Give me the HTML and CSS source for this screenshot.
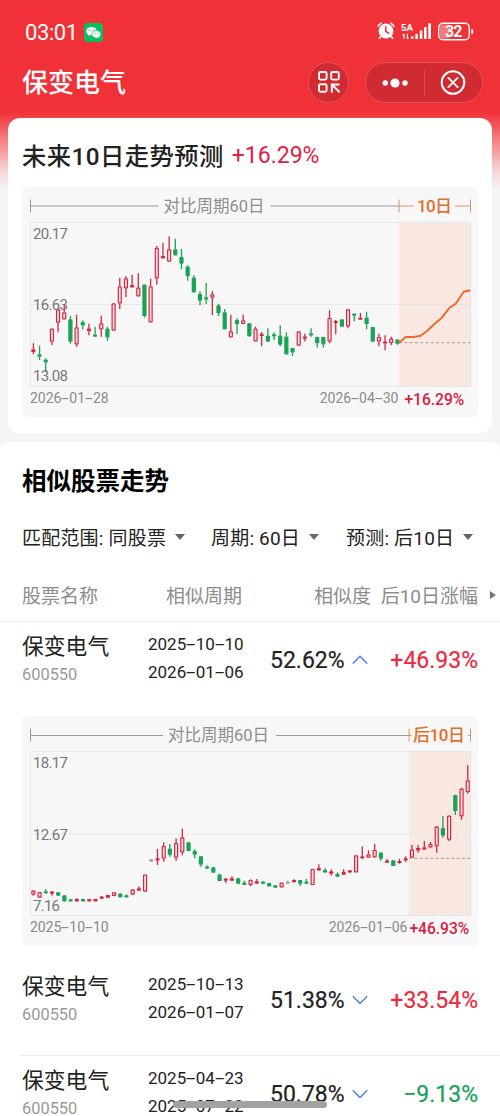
FILE: index.html
```html
<!DOCTYPE html>
<html lang="zh-CN">
<head>
<meta charset="utf-8">
<title>保变电气</title>
<link rel="stylesheet" href="styles.css">
</head>
<body>
<div class="screen">
  <header class="top">
    <div class="status">
      <span class="clock">03:01</span>
      <svg class="wechat" width="19" height="19" viewBox="0 0 19 19"><rect width="19" height="19" rx="4" fill="#07c160"/><path d="M7.500 4C4.600 4 2.300 5.900 2.300 8.200c0 1.300.7 2.400 1.800 3.200l-.4 1.500 1.700-.9c.7.2 1.300.3 2.100.3h.4c-.8-2.900 1.500-5.100 4.700-5.100C12.100 5.200 10 4 7.500 4z" fill="#fff"/><path d="M12.400 7.700c-2.400 0-4.200 1.500-4.200 3.500s1.800 3.500 4.200 3.500c.5 0 1-.1 1.500-.2l1.400.7-.4-1.200c1-.7 1.600-1.700 1.600-2.800 0-2-1.800-3.500-4.100-3.500z" fill="#fff"/><g fill="#07c160"><circle cx="5.800" cy="7.100" r=".7"/><circle cx="9.200" cy="7.100" r=".7"/><circle cx="11" cy="10.100" r=".6"/><circle cx="13.800" cy="10.100" r=".6"/></g></svg>
      <svg class="sys" width="100" height="22" viewBox="375 21 100 22">
        <g fill="none" stroke="#fff" stroke-linecap="round"><path d="M378 27.300q1-2 3.300-3M390.700 24.300q2.300 1 3.300 3" stroke-width="1.500"/><path d="M380.700 37.500l-1.300 1.700M391.300 37.500l1.300 1.700" stroke-width="1.700"/></g>
        <circle cx="386" cy="32" r="7.400" fill="#fff"/><path d="M385.800 27.800v4.700l3 1.700" fill="none" stroke="#ee3038" stroke-width="1.500" stroke-linecap="round"/>
        <text x="401" y="31.700" class="net" textLength="12">5A</text>
        <path d="M404 35v4.800M402.700 36.300l1.300-1.300M407.300 39.800V35M408.600 38.500l-1.300 1.300" fill="none" stroke="#fff" stroke-width="1.100"/>
        <g fill="#fff"><rect x="411" y="37.300" width="2.400" height="2.700" rx=".5"/><rect x="415.400" y="34.700" width="2.500" height="5.300" rx=".5"/><rect x="419.800" y="31.400" width="2.500" height="8.600" rx=".5"/><rect x="424" y="28" width="2.600" height="12" rx=".5"/><rect x="428.300" y="24.300" width="2.700" height="15.700" rx=".5"/></g>
        <rect x="438.700" y="24.200" width="30.600" height="16.600" rx="4.300" fill="none" stroke="#fff" stroke-width="1.400"/><rect x="440" y="25.500" width="10" height="14" rx="3" fill="#fff" opacity=".35"/><rect x="471.300" y="30" width="1.800" height="5" rx=".9" fill="#fff"/>
        <text x="445" y="38" class="level" textLength="17.500">32</text>
      </svg>
    </div>
    <div class="nav">
      <h1 class="title">保变电气</h1>
      <button class="round" aria-label="scan">
        <svg width="24" height="24" viewBox="0 0 24 24" fill="none" stroke="#fff" stroke-width="1.900"><rect x="2" y="2" width="7.600" height="7.600" rx="1.500"/><rect x="14.200" y="2" width="7.600" height="7.600" rx="1.500"/><rect x="2" y="14.200" width="7.600" height="7.600" rx="1.500"/><path d="M22.500 14.500h-7.700v8M15 14.700l7.700 7.500"/></svg>
      </button>
      <div class="capsule">
        <svg width="118" height="40" viewBox="0 0 118 40"><g fill="#fff"><circle cx="19.200" cy="20" r="2.700"/><circle cx="29" cy="20" r="4.600"/><circle cx="39" cy="20" r="2.700"/></g><path d="M58.500 7v26" stroke="#f0565a" stroke-opacity=".6"/><circle cx="87" cy="19.500" r="11.300" fill="none" stroke="#fff" stroke-width="2"/><path d="M82.400 14.900l9.200 9.200M91.600 14.900L82.400 24.100" stroke="#fff" stroke-width="1.900" stroke-linecap="round"/></svg>
      </div>
    </div>
  </header>

  <section class="card">
    <h2 class="forecast">未来10日走势预测 <span class="gain">+16.29%</span></h2>
    <div class="chart">
      <svg width="456" height="230" viewBox="22 0 456 230">
        <g class="ruler"><path d="M30.500 12.500v13M30.500 19H158.500M270.500 19H399"/><text x="163.500" y="24.600" textLength="101">对比周期60日</text></g>
        <rect x="399" y="35.500" width="71.500" height="164" class="zone"/>
        <path class="grid" d="M30.500 35.500h440v164h-440zM30.500 117.500h440"/>
        <g class="ruler after"><path d="M399 12.500v13M399 19h15M455 19h15.500M470.500 12.500v13"/><text x="417" y="24.600" textLength="35">10日</text></g>
        <g id="candles-now"></g>
        <path class="base" d="M399 155.700h71.500"/>
        <path class="trend" d="M399 155.700L405.700 150H413.300L420.700 148.700L427.300 143.700L434.700 136.700L441.300 131.300L449 121.300L455.700 116.700L463.700 104.700L470.300 103.300"/>
        <g class="scale"><text x="33" y="51.600" textLength="35">20.17</text><text x="33" y="123" textLength="35">16.63</text><text x="33" y="194.300" textLength="35">13.08</text></g>
      </svg>
      <div class="foot"><span>2026<i>-</i>01<i>-</i>28</span><span class="end">2026<i>-</i>04<i>-</i>30</span><b>+16.29%</b></div>
    </div>
  </section>

  <section class="similar">
    <h2 class="heading">相似股票走势</h2>
    <div class="filters">
      <span>匹配范围: 同股票</span><em></em><span class="f2">周期: 60日</span><em></em><span class="f3">预测: 后10日</span><em></em>
    </div>
    <div class="row head"><span>股票名称</span><span>相似周期</span><span>相似度</span><span>后10日涨幅</span><u></u></div>

    <div class="row first">
      <div class="stock"><strong>保变电气</strong><small>600550</small></div>
      <div class="dates"><span>2025<i>-</i>10<i>-</i>10</span><span>2026<i>-</i>01<i>-</i>06</span></div>
      <div class="match">52.62%</div>
      <svg class="arrow" width="16" height="10" viewBox="0 0 16 10"><path d="M.8 8.500L8 1.200l7.200 7.300"/></svg>
      <div class="rate up">+46.93%</div>
    </div>
    <div class="chart inset">
      <svg width="456" height="230" viewBox="22 0 456 230">
        <g class="ruler"><path d="M30.500 12.500v13M30.500 19.500H163M276 19.500H409"/><text x="168" y="24.800" textLength="101">对比周期60日</text></g>
        <rect x="409" y="35.500" width="61.500" height="164" class="zone"/>
        <path class="grid" d="M30.500 35.500h440v164h-440zM30.500 118h440"/>
        <g class="ruler after"><path d="M409 12.500v13M409 19.500h2.500M468 19.500h2.500M470.500 12.500v13"/><text x="413" y="24.800" textLength="52">后10日</text></g>
        <path class="base" d="M409 142.300h61.500"/>
        <g id="candles-past"></g>
        <g class="scale"><text x="33" y="51.900" textLength="35">18.17</text><text x="33" y="123.600" textLength="35">12.67</text><text x="33" y="194.600" textLength="27">7.16</text></g>
      </svg>
      <div class="foot"><span>2025<i>-</i>10<i>-</i>10</span><span class="end">2026<i>-</i>01<i>-</i>06</span><b>+46.93%</b></div>
    </div>
    <div class="row">
      <div class="stock"><strong>保变电气</strong><small>600550</small></div>
      <div class="dates"><span>2025<i>-</i>10<i>-</i>13</span><span>2026<i>-</i>01<i>-</i>07</span></div>
      <div class="match">51.38%</div>
      <svg class="arrow" width="16" height="10" viewBox="0 0 16 10"><path d="M.8 1.200L8 8.500l7.200-7.300"/></svg>
      <div class="rate up">+33.54%</div>
    </div>
    <div class="row ruled">
      <div class="stock"><strong>保变电气</strong><small>600550</small></div>
      <div class="dates"><span>2025<i>-</i>04<i>-</i>23</span><span>2025<i>-</i>07<i>-</i>22</span></div>
      <div class="match">50.78%</div>
      <svg class="arrow" width="16" height="10" viewBox="0 0 16 10"><path d="M.8 1.200L8 8.500l7.200-7.300"/></svg>
      <div class="rate down">−9.13%</div>
    </div>
  </section>
  <div class="homebar"></div>
</div>
<script src="charts.js"></script>
</body>
</html>
```
FILE: styles.css
```css
* { box-sizing: border-box; margin: 0; padding: 0; }
body {
  width: 500px;
  height: 1116px;
  overflow: hidden;
  background: #f5f5f5;
  font-family: Roboto, "Noto Sans CJK SC", sans-serif;
  color: #222;
}
.screen {
  position: relative;
  height: 1116px;
  overflow: hidden;
  background: linear-gradient(#f13138 0, #f13138 112px, #f58a8d 144px, #f5d4d5 170px, #f5f5f5 190px);
}
svg { display: block; flex: none; }
i { display: inline-block; width: .5615em; font-style: normal; text-align: center; transform: scaleX(2); }
.top { height: 118px; color: #fff; }
.status { display: flex; align-items: center; height: 62px; padding: 3px 25px 0 25px; }
.clock { width: 59px; font-size: 22px; line-height: 26px; letter-spacing: -.4px; white-space: nowrap; }
.wechat { margin-top: -1px; }
.sys { margin-left: auto; margin-top: -3px; }
.net { font-size: 9.500px; font-weight: 700; fill: #fff; }
.level { font-size: 16px; font-weight: 700; fill: #fff; }
.nav { display: flex; align-items: center; height: 40px; padding: 0 17px 0 22px; }
.title { flex: 1; font-size: 26px; font-weight: 500; line-height: 38px; padding-top: 1px; }
.round, .capsule { border: 1px solid #e75156; background: #d02b32; border-radius: 21px; height: 41px; }
.round { width: 41px; display: grid; place-items: center; }
.capsule { width: 118px; margin-left: 16px; }

.card { margin: 0 8px; height: 315px; padding: 17px 14px 0; border-radius: 12px; background: #fff; }
.forecast { display: flex; align-items: center; gap: 8px; height: 38px; font-size: 24.300px; font-weight: 500; white-space: nowrap; letter-spacing: .45px; }
.gain { padding-top: 3px; font-size: 23px; font-weight: 400; letter-spacing: 0; color: #e2213f; }
.chart { position: relative; width: 456px; height: 230px; border-radius: 6px; background: #f7f7f7; }
.card .chart { margin-top: 14px; }
.foot { position: absolute; inset: 202px 0 auto 8px; display: flex; font-size: 14px; line-height: 18px; color: #8a8a8a; white-space: nowrap; }
.foot .end { margin-left: 211px; }
.foot b { margin-left: 6px; font-size: 15.600px; font-weight: 500; line-height: 22px; color: #d7213f; }
.inset .foot .end { margin-left: 220px; }
.inset .foot b { margin-left: 2px; }
.ruler path { fill: none; stroke: #999; }
.ruler text { font-size: 16.500px; fill: #8e8e8e; }
.ruler.after path { stroke: #d89a68; }
.ruler.after text { font-size: 17px; font-weight: 500; fill: #e0702e; }
.zone { fill: #f8e8e1; }
.grid { fill: none; stroke: #e3e3e3; stroke-opacity: .75; }
.base { fill: none; stroke: #bba9a2; stroke-width: 1.200; stroke-dasharray: 3 2.300; }
.trend { fill: none; stroke: #ed6a2a; stroke-width: 1.900; stroke-linejoin: round; }
.scale text { font-size: 15px; fill: #777; }
.rise path { stroke: #d9243f; stroke-width: 1.300; fill: none; }
.rise rect { stroke: #d9243f; stroke-width: 1.200; fill: #fbe3e7; }
.rise.thin rect { fill: #d9243f; }
.fall path { stroke: #17a354; stroke-width: 1.300; fill: none; }
.fall rect { stroke: #17a354; stroke-width: 1.200; fill: #17a354; }
.flat path, .flat rect { stroke: #999; fill: #999; }

.similar { margin-top: 9px; height: 680px; border-radius: 8px 8px 0 0; background: #fff; }
.heading { height: 76px; padding: 21px 22px 0; font-size: 24.500px; line-height: 38px; font-weight: 700; color: #000; }
.filters { display: flex; align-items: center; height: 38px; padding: 0 0 1px 22px; font-size: 19px; white-space: nowrap; letter-spacing: .2px; }
.filters span { width: 144px; }
.filters em { width: 0; height: 0; margin-left: 9px; border: 5.500px solid transparent; border-top: 6px solid #666; border-bottom: 0; }
.filters .f2 { width: 89px; margin-left: 26px; }
.filters .f3 { width: 108px; margin-left: 27px; }
.row { display: grid; grid-template-columns: 126px 122px 76px 26px 1fr; height: 94px; padding: 0 22px; }
.row.head { grid-template-columns: 110px 110px 129px 1fr 18px; height: 66px; align-items: center; padding-top: 12px; padding-right: 4px; border-bottom: 1px solid #eee; font-size: 19px; color: #8c8c8c; white-space: nowrap; }
.head span:nth-child(n+2) { text-align: right; }
.head u { width: 0; height: 0; justify-self: end; border: 4px solid transparent; border-left: 6px solid #777; border-right: 0; }
.stock { padding-top: 9px; }
.stock strong { display: block; font-size: 21.800px; line-height: 32px; font-weight: 400; }
.stock small { display: block; font-size: 16.400px; line-height: 23px; color: #999; }
.dates { padding-top: 9px; font-size: 17px; line-height: 27.500px; }
.dates span { display: block; }
.match, .rate { padding-top: 1px; line-height: 76px; font-size: 23px; }
.match { padding-left: 0; -webkit-text-stroke: .2px currentColor; }
.rate { -webkit-text-stroke: .2px currentColor; text-align: right; }
.arrow { margin-top: 33px; margin-left: 6px; fill: none; stroke: #4a7ae0; stroke-width: 1.300; }
.up { color: #eb2a3f; }
.down { color: #17a354; }
.inset { margin: 0 22px 16px; }
.ruled { position: relative; height: 61px; }
.ruled::before { content: ""; position: absolute; left: 20px; right: 0; top: -1px; height: 1px; background: #eee; }
.homebar { position: absolute; left: 173px; top: 1101px; width: 154px; height: 7px; border-radius: 4px; background: #a2a2a2; }
```
FILE: charts.js
```js
// Each candle: type (r rise, g fall, n flat), high, body top, body bottom, low, in thirds of a pixel.
const now = `r460,478,486,493 g467,493,500,510 g505,509,517,547 r416,416,455,465 r352,358,398,427 r345,367,388,388
g378,388,455,461 r375,412,463,470 g391,396,406,418 r401,416,423,436 g410,434,440,440 r377,400,418,440
g410,416,442,452 r340,340,422,422 r263,289,340,357 r259,265,295,321 r254,285,292,292 r250,293,319,319
g284,284,378,383 r266,289,397,397 r168,174,265,284 r158,198,205,205 r139,178,215,215 g146,178,196,196
g176,201,221,238 g226,230,258,272 g255,263,307,307 g304,312,332,346 g279,322,328,342 r304,313,323,375
g341,346,369,378 g357,367,418,418 r374,424,442,442 g385,390,402,432 r374,391,402,402 g400,400,439,439
r410,416,454,454 r426,432,438,469 g415,437,455,455 g427,433,439,450 g406,437,464,469 g427,440,493,493
g474,474,487,498 r424,424,467,467 r431,440,446,454 g415,430,436,440 g441,441,459,473 g441,441,463,473
r361,384,455,460 r390,393,399,433 g388,388,410,410 r358,358,409,415 g371,371,377,394 r369,383,389,389
g365,383,402,418 g411,411,455,455 r431,441,454,469 r436,455,460,481 r440,446,459,465 g447,449,461,464`;
const past = `r525,527,539,542 r531,531,548,548 g522,529,534,536 r528,530,536,542 g531,532,542,543 g540,541,559,560
g552,553,559,559 r550,552,559,560 g552,552,559,559 r552,552,559,559 r552,552,559,559 r543,545,551,552
r539,540,548,549 r531,532,543,544 g535,536,547,547 g538,541,547,547 r522,523,539,541 r514,520,527,527
r479,479,530,530 n433,433,440,440 r402,430,436,450 r382,393,431,440 g387,401,419,425 r370,384,428,437
r341,367,412,421 g382,382,408,408 g403,408,419,430 g424,424,449,455 g451,455,460,462 g456,457,473,473
g477,479,498,499 r490,491,497,504 r484,490,497,498 g490,490,506,507 g497,503,510,510 r493,495,510,513
r492,499,506,507 g498,500,506,508 g503,504,514,514 g511,511,518,518 r503,503,517,517 n496,500,506,506
r493,495,501,503 g495,495,506,513 g492,500,506,507 r462,462,510,510 r448,459,466,467 g459,465,472,474
r463,469,476,482 g472,477,485,485 r463,471,479,480 r465,466,472,474 r421,421,472,472 r394,424,429,433
r406,418,428,429 r386,405,427,427 g412,413,431,437 r432,437,443,444 g435,436,453,453 r431,438,444,446
r424,430,436,441 r390,404,428,428 r391,399,406,413 r378,397,403,404 r381,387,397,398 r333,335,394,413
g303,339,362,368 r302,302,374,378 g239,240,288,300 r220,221,304,314 r151,196,231,236`;
const kinds = { r: 'rise', g: 'fall', n: 'flat' };

function draw(id, data, step, shift) {
  document.getElementById(id).innerHTML = data.trim().split(/\s+/).map((c, i) => {
    const [high, top, bottom, low] = c.slice(1).split(',').map(v => v / 3 + shift);
    const x = 33.4 + i * step;
    const thin = bottom - top < 2.8 ? ' thin' : '';
    const h = Math.max(bottom - top - 1, 0.8);
    return `<g class="${kinds[c[0]]}${thin}"><path d="M${x} ${high}V${top}M${x} ${bottom}V${low}"/>` +
      `<rect x="${x - 1.5}" y="${top + 0.5}" width="3" height="${h}" rx=".3"/></g>`;
  }).join('');
}
draw('candles-now', now, 6.17, 3);
draw('candles-past', past, 6.205, -1);
```
